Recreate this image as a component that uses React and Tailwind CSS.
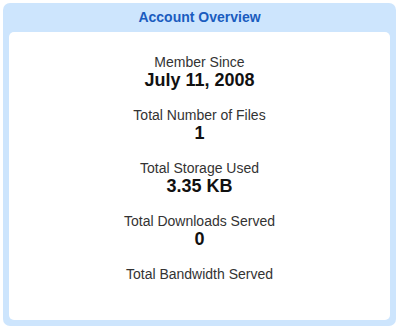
import React from 'react';

const STATS = [
  { label: 'Member Since', value: 'July 11, 2008' },
  { label: 'Total Number of Files', value: '1' },
  { label: 'Total Storage Used', value: '3.35 KB' },
  { label: 'Total Downloads Served', value: '0' },
  { label: 'Total Bandwidth Served', value: '' },
];

export default function App() {
  return (
    <div className="h-[330px] w-[400px] bg-white p-[3px] font-['Liberation_Sans',Arial,sans-serif]">
      <div className="flex h-[323px] w-[393px] flex-col rounded-[7px] bg-[#cde5fd] px-[6px] pb-[6px]">
        {/* header */}
        <div className="flex h-[29px] shrink-0 items-center justify-center">
          <h2 className="text-[14px] font-bold text-[#1a5cbf]">Account Overview</h2>
        </div>

        {/* body */}
        <div className="flex flex-1 flex-col items-center gap-[17px] rounded-[5px] bg-white pt-[22px]">
          {STATS.map((s) => (
            <div key={s.label} className="flex flex-col items-center">
              <p className="text-[14px] leading-[16px] text-[#333]">{s.label}</p>
              {s.value && (
                <p className="text-[18px] font-bold leading-[20px] text-[#111]">{s.value}</p>
              )}
            </div>
          ))}
        </div>
      </div>
    </div>
  );
}
